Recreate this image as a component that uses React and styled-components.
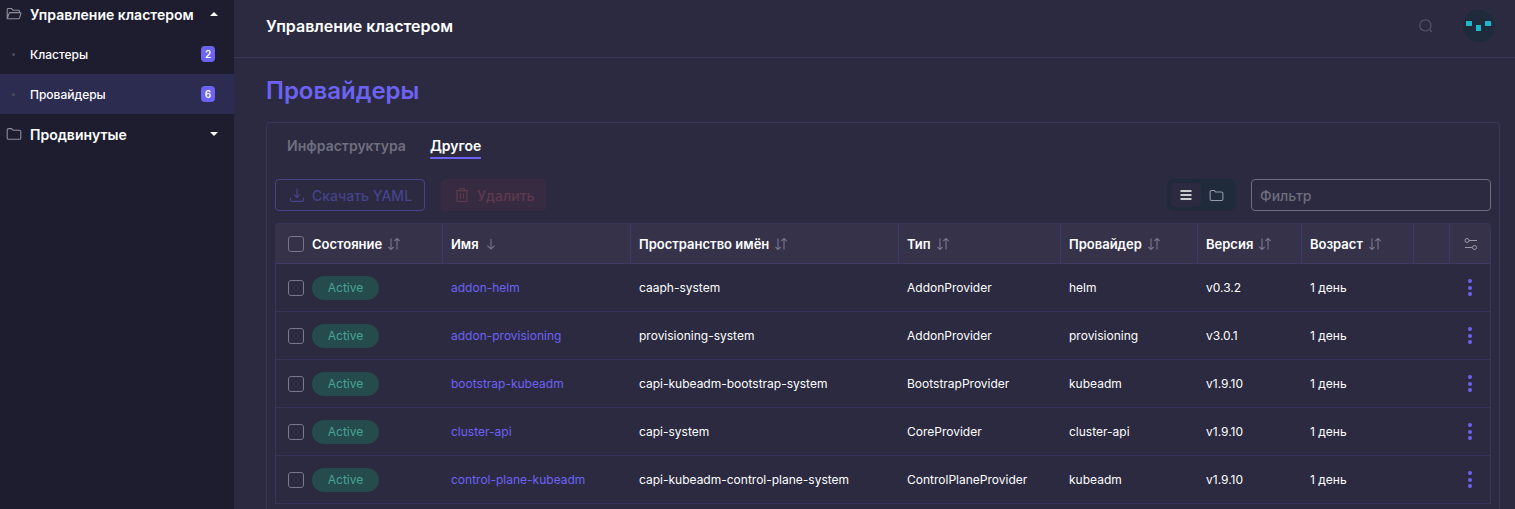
import React from 'react'
import styled, { createGlobalStyle } from 'styled-components'

const GlobalStyle = createGlobalStyle`
  html, body { margin: 0; padding: 0; height: 100%; overflow: hidden; background: #2b2a40; }
  body { font-family: Inter, "Noto Sans", sans-serif; color: #fff; }
  * { box-sizing: border-box; }
`

const COLUMNS = '167px 188px 268px 162px 137px 104px 112px 36px 42px'

const rows = [
  ['addon-helm', 'caaph-system', 'AddonProvider', 'helm', 'v0.3.2'],
  ['addon-provisioning', 'provisioning-system', 'AddonProvider', 'provisioning', 'v3.0.1'],
  ['bootstrap-kubeadm', 'capi-kubeadm-bootstrap-system', 'BootstrapProvider', 'kubeadm', 'v1.9.10'],
  ['cluster-api', 'capi-system', 'CoreProvider', 'cluster-api', 'v1.9.10'],
  ['control-plane-kubeadm', 'capi-kubeadm-control-plane-system', 'ControlPlaneProvider', 'kubeadm', 'v1.9.10'],
]

function FolderIcon({ open, size = 16, color = '#8e8d9a' }) {
  return (
    <svg width={size} height={size} viewBox="0 0 16 16" fill="none" stroke={color} strokeWidth="1.1" strokeLinejoin="round">
      {open ? (
        <path d="M1.2 12.6V3.4c0-.5.4-.9.9-.9h3.4l1.6 1.7h5.4c.5 0 .9.4.9.9v1.3M1.2 12.6l2-5.4c.1-.4.4-.6.8-.6h10.2c.5 0 .8.4.7.9l-1.5 4.6c-.1.4-.5.7-.9.7H2c-.5 0-.8-.3-.8-.2z" />
      ) : (
        <path d="M1.2 4c0-.8.6-1.4 1.4-1.4h3l1.6 1.7h6.2c.8 0 1.4.6 1.4 1.4v6.2c0 .8-.6 1.4-1.4 1.4H2.6c-.8 0-1.4-.6-1.4-1.4z" />
      )}
    </svg>
  )
}

function SortIcon({ active }) {
  return (
    <SortGlyph width="14" height="14" viewBox="0 0 14 14" fill="none" stroke="#77768a" strokeWidth="1.1">
      {active ? (
        <path d="M7 2v10M3.4 8.6 7 12l3.6-3.4" />
      ) : (
        <path d="M4 1.5v11M1.4 10 4 12.5 6.6 10M10 12.5v-11M7.4 4 10 1.5 12.6 4" />
      )}
    </SortGlyph>
  )
}

function Header({ children, active }) {
  return (
    <HeadCell>
      {children}
      <SortIcon active={active} />
    </HeadCell>
  )
}

export default function App() {
  return (
    <Page>
      <GlobalStyle />
      <Sidebar>
        <Group>
          <FolderIcon open />
          <GroupLabel>Управление кластером</GroupLabel>
          <Caret $up />
        </Group>
        <NavItem>
          <Dot />
          <NavLabel>Кластеры</NavLabel>
          <Badge>2</Badge>
        </NavItem>
        <NavItem $active>
          <Dot />
          <NavLabel>Провайдеры</NavLabel>
          <Badge>6</Badge>
        </NavItem>
        <Group>
          <FolderIcon />
          <GroupLabel>Продвинутые</GroupLabel>
          <Caret />
        </Group>
      </Sidebar>

      <Main>
        <TopBar>
          <TopTitle>Управление кластером</TopTitle>
          <TopActions>
            <svg width="16" height="16" viewBox="0 0 16 16" fill="none" stroke="#55546a" strokeWidth="1.2">
              <circle cx="7.4" cy="7.4" r="5.6" />
              <path d="m12 12 2 2" />
            </svg>
            <Avatar>
              <svg width="28" height="12" viewBox="0 0 28 12">
                <path d="M1 1h6v5H1zM11 5h5v6h-5zM20 1h6v5h-6z" fill="#1fb6cc" />
              </svg>
            </Avatar>
          </TopActions>
        </TopBar>

        <Content>
          <PageTitle>Провайдеры</PageTitle>
          <Card>
            <Tabs>
              <Tab>Инфраструктура</Tab>
              <Tab $active>Другое</Tab>
            </Tabs>

            <Toolbar>
              <OutlineButton>
                <svg width="16" height="16" viewBox="0 0 16 16" fill="none" stroke="currentColor" strokeWidth="1.2">
                  <path d="M8 1.5v9M4.8 7.4 8 10.6l3.2-3.2M1.5 10.5v2.4c0 .8.6 1.4 1.4 1.4h10.2c.8 0 1.4-.6 1.4-1.4v-2.4" />
                </svg>
                Скачать YAML
              </OutlineButton>
              <DangerButton>
                <svg width="16" height="16" viewBox="0 0 16 16" fill="none" stroke="currentColor" strokeWidth="1.2">
                  <path d="M1.8 3.6h12.4M5.6 3.4V2.2c0-.4.3-.7.7-.7h3.4c.4 0 .7.3.7.7v1.2M3 3.6v9.8c0 .6.5 1.1 1.1 1.1h7.8c.6 0 1.1-.5 1.1-1.1V3.6M6.4 6.6v5M9.6 6.6v5" />
                </svg>
                Удалить
              </DangerButton>
              <Spacer />
              <ViewSwitch>
                <ViewOption $active>
                  <svg width="14" height="14" viewBox="0 0 14 14" stroke="#fff" strokeWidth="1.4">
                    <path d="M1.5 3h11M1.5 7h11M1.5 11h11" />
                  </svg>
                </ViewOption>
                <ViewOption>
                  <FolderIcon size={15} color="#9a99a8" />
                </ViewOption>
              </ViewSwitch>
              <FilterInput placeholder="Фильтр" />
            </Toolbar>

            <Table>
              <HeadRow>
                <HeadCell>
                  <Check />
                  Состояние
                  <SortIcon />
                </HeadCell>
                <Header active>Имя</Header>
                <Header>Пространство имён</Header>
                <Header>Тип</Header>
                <Header>Провайдер</Header>
                <Header>Версия</Header>
                <Header>Возраст</Header>
                <HeadCell />
                <HeadCell $center>
                  <svg width="14" height="14" viewBox="0 0 14 14" fill="none" stroke="#9a99a8" strokeWidth="1">
                    <circle cx="3" cy="3.5" r="2" />
                    <path d="M5 3.5h8M1 10.5h7" />
                    <circle cx="10.5" cy="10.5" r="2" />
                  </svg>
                </HeadCell>
              </HeadRow>
              {rows.map(([name, namespace, type, provider, version]) => (
                <Row key={name}>
                  <Cell>
                    <Check />
                    <Status>Active</Status>
                  </Cell>
                  <Cell><NameLink>{name}</NameLink></Cell>
                  <Cell>{namespace}</Cell>
                  <Cell>{type}</Cell>
                  <Cell>{provider}</Cell>
                  <Cell>{version}</Cell>
                  <Cell>1 день</Cell>
                  <Cell />
                  <Cell $center>
                    <Dots><i /><i /><i /></Dots>
                  </Cell>
                </Row>
              ))}
            </Table>
          </Card>
        </Content>
      </Main>
    </Page>
  )
}

const Page = styled.div`
  display: flex;
  width: 1515px;
  height: 509px;
  overflow: hidden;
`

const Sidebar = styled.aside`
  flex: 0 0 234px;
  margin-top: -6px;
  height: 515px;
  background: #1e1d2f;
`

const Group = styled.div`
  display: flex;
  align-items: center;
  height: 40px;
  padding: 0 16px 0 6px;
  gap: 8px;
`

const GroupLabel = styled.span`
  flex: 1;
  font-size: 14px;
  font-weight: 600;
  color: #fff;
`

const Caret = styled.span`
  width: 0;
  height: 0;
  border-left: 4px solid transparent;
  border-right: 4px solid transparent;
  ${p => (p.$up ? 'border-bottom: 4px solid #fff;' : 'border-top: 4px solid #fff;')}
`

const NavItem = styled.div`
  display: flex;
  align-items: center;
  height: 40px;
  padding: 0 19px 0 12px;
  background: ${p => (p.$active ? '#2c2b50' : 'transparent')};
`

const Dot = styled.span`
  width: 3px;
  height: 3px;
  border-radius: 50%;
  background: #4a4960;
  margin-right: 15px;
`

const NavLabel = styled.span`
  flex: 1;
  font-size: 12px;
  font-weight: 500;
  color: #fff;
`

const Badge = styled.span`
  display: flex;
  align-items: center;
  justify-content: center;
  width: 14px;
  height: 16px;
  border-radius: 4px;
  background: #6c63f5;
  color: #fff;
  font-size: 10px;
  font-weight: 600;
`

const Main = styled.main`
  flex: 1;
  min-width: 0;
  background: #2b2a40;
`

const TopBar = styled.header`
  display: flex;
  align-items: center;
  justify-content: space-between;
  height: 58px;
  padding: 0 20px 6px 32px;
  border-bottom: 1px solid #38375a;
`

const TopTitle = styled.div`
  font-size: 16px;
  font-weight: 600;
`

const TopActions = styled.div`
  display: flex;
  align-items: center;
  gap: 29px;
`

const Avatar = styled.div`
  display: flex;
  align-items: center;
  justify-content: center;
  width: 32px;
  height: 32px;
  border-radius: 50%;
  background: #1f2a3a;
`

const Content = styled.div`
  padding: 19px 15px 0 32px;
`

const PageTitle = styled.h1`
  margin: 0 0 17px;
  font-size: 24px;
  line-height: 28px;
  font-weight: 600;
  color: #6c63f5;
`

const Card = styled.section`
  border: 1px solid #38375a;
  border-radius: 4px;
  padding: 0 8px;
  height: 400px;
`

const Tabs = styled.div`
  display: flex;
  gap: 24px;
  padding: 13px 12px 0;
  height: 56px;
`

const Tab = styled.div`
  height: 23px;
  font-size: 14px;
  line-height: 19px;
  font-weight: 600;
  color: ${p => (p.$active ? '#fff' : '#6f6e7e')};
  border-bottom: 2px solid ${p => (p.$active ? '#6c63f5' : 'transparent')};
`

const Toolbar = styled.div`
  display: flex;
  align-items: center;
  height: 32px;
  margin-bottom: 12px;
`

const Spacer = styled.div`
  flex: 1;
`

const OutlineButton = styled.div`
  display: flex;
  align-items: center;
  gap: 7px;
  width: 150px;
  height: 32px;
  padding-left: 13px;
  border: 1px solid #45438a;
  border-radius: 4px;
  color: #45438a;
  font-size: 14px;
  font-weight: 500;
`

const DangerButton = styled.div`
  display: flex;
  align-items: center;
  gap: 7px;
  width: 105px;
  height: 32px;
  margin-left: 16px;
  padding-left: 13px;
  border-radius: 4px;
  background: #372b41;
  color: #5f3a4e;
  font-size: 14px;
  font-weight: 500;
`

const ViewSwitch = styled.div`
  display: flex;
  gap: 0;
  width: 68px;
  height: 32px;
  padding: 4px;
  border-radius: 6px;
  background: #1f2a3a;
  margin-right: 16px;
`

const ViewOption = styled.div`
  display: flex;
  align-items: center;
  justify-content: center;
  width: 30px;
  height: 24px;
  border-radius: 4px;
  background: ${p => (p.$active ? '#2b2a40' : 'transparent')};
`

const FilterInput = styled.input`
  width: 240px;
  height: 32px;
  padding: 0 8px;
  background: transparent;
  border: 1px solid #6f6e7e;
  border-radius: 4px;
  color: #fff;
  font: 500 14px Inter, sans-serif;
  outline: none;
  &::placeholder { color: #6f6e7e; opacity: 1; }
`

const Table = styled.div`
  width: 1216px;
  border: 1px solid #38375a;
  border-bottom: 0;
  border-radius: 4px 4px 0 0;
  margin-top: 0;
`

const HeadRow = styled.div`
  display: grid;
  grid-template-columns: ${COLUMNS};
  height: 40px;
  margin-left: -1px;
  background: #35324a;
  border-bottom: 1px solid #3d3b66;
`

const HeadCell = styled.div`
  display: flex;
  align-items: center;
  justify-content: ${p => (p.$center ? 'center' : 'flex-start')};
  padding-left: ${p => (p.$center ? 0 : '8px')};
  font-size: 13px;
  font-weight: 600;
  color: #fff;
  border-left: 1px solid #3d3b66;
  &:first-child { padding-left: 13px; border-left: 0; }
`

const SortGlyph = styled.svg`
  margin-left: 5px;
`

const Row = styled.div`
  display: grid;
  grid-template-columns: ${COLUMNS};
  height: 48px;
  margin-left: -1px;
  border-bottom: 1px solid #35345a;
`

const Cell = styled.div`
  display: flex;
  align-items: center;
  justify-content: ${p => (p.$center ? 'center' : 'flex-start')};
  padding-left: ${p => (p.$center ? 0 : '9px')};
  font-size: 12px;
  font-weight: 400;
  color: #fff;
  &:first-child { padding-left: 13px; }
`

const Check = styled.span`
  flex: none;
  width: 16px;
  height: 16px;
  margin-right: 8px;
  border: 1px solid #77768a;
  border-radius: 3px;
`

const Status = styled.span`
  display: flex;
  align-items: center;
  justify-content: center;
  width: 67px;
  height: 24px;
  border-radius: 12px;
  background: #264b4c;
  color: #45a596;
  font-size: 12px;
`

const NameLink = styled.span`
  color: #6c63f5;
`

const Dots = styled.div`
  display: flex;
  flex-direction: column;
  gap: 2.5px;
  i {
    display: block;
    width: 4px;
    height: 4px;
    border-radius: 50%;
    background: #6c63f5;
  }
`
